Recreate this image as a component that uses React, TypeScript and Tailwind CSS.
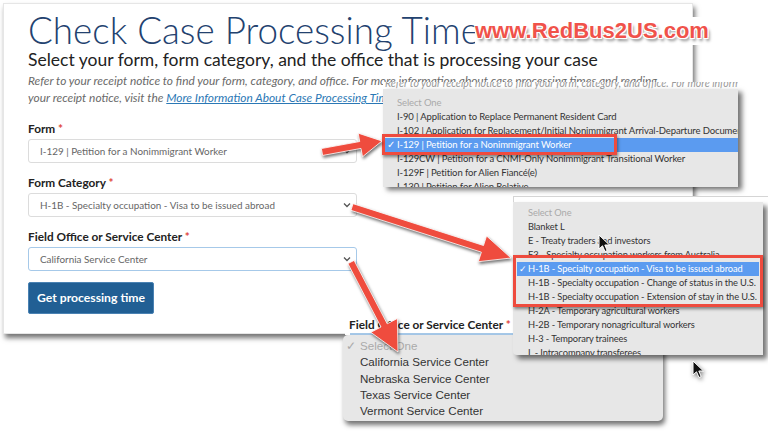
import React from "react";

const sans = { fontFamily: "Lato, 'Open Sans', sans-serif" };
const mac = { fontFamily: "'Liberation Sans', Arial, sans-serif" };

function arrowPoints(x1: number, y1: number, x2: number, y2: number, sw: number, hl: number, hw: number) {
  const dx = x2 - x1;
  const dy = y2 - y1;
  const len = Math.hypot(dx, dy);
  const ux = dx / len;
  const uy = dy / len;
  const px = -uy;
  const py = ux;
  const bx = x2 - ux * hl;
  const by = y2 - uy * hl;
  const pts = [
    [x1 + (px * sw) / 2, y1 + (py * sw) / 2],
    [bx + (px * sw) / 2, by + (py * sw) / 2],
    [bx + (px * hw) / 2, by + (py * hw) / 2],
    [x2, y2],
    [bx - (px * hw) / 2, by - (py * hw) / 2],
    [bx - (px * sw) / 2, by - (py * sw) / 2],
    [x1 - (px * sw) / 2, y1 - (py * sw) / 2],
  ];
  return pts.map((p) => p.join(",")).join(" ");
}

const Chevron = () => (
  <svg width="8" height="6" viewBox="0 0 8 6" className="shrink-0">
    <path d="M1 1.5 L4 4.5 L7 1.5" fill="none" stroke="#555" strokeWidth="1.3" />
  </svg>
);

const Cursor = ({ className }: { className: string }) => (
  <svg width="13" height="19" viewBox="0 0 13 19" className={className}>
    <path d="M1 1 L1 15 L4.5 11.8 L7 17.5 L9.2 16.6 L6.8 11 L11.5 11 Z" fill="#111" stroke="#fff" strokeWidth="1" />
  </svg>
);

const Field = ({ label, value, focused }: { label: string; value: string; focused?: boolean }) => (
  <div>
    <div className="h-[16px] leading-[16px] text-[11.8px] font-bold text-[#222]">
      {label} <span className="text-[#e0453a]">*</span>
    </div>
    <div
      className={`mt-[2px] h-[24px] w-[329px] rounded-[3px] border flex items-center justify-between pl-[11px] pr-[5px] text-[9.9px] text-[#666] ${
        focused ? "border-[#a6c9e9]" : "border-[#dcdcdc]"
      }`}
    >
      <span>{value}</span>
      <Chevron />
    </div>
  </div>
);

const formItems = [
  "I-90 | Application to Replace Permanent Resident Card",
  "I-102 | Application for Replacement/Initial Nonimmigrant Arrival-Departure Document",
];
const formItemsAfter = [
  "I-129CW | Petition for a CNMI-Only Nonimmigrant Transitional Worker",
  "I-129F | Petition for Alien Fiancé(e)",
  "I-130 | Petition for Alien Relative",
];

const catBefore = ["Blanket L", "E - Treaty traders and investors", "E3 - Specialty occupation workers from Australia"];
const catAfter = [
  "H-1B - Specialty occupation - Change of status in the U.S.",
  "H-1B - Specialty occupation - Extension of stay in the U.S.",
  "H-2A - Temporary agricultural workers",
  "H-2B - Temporary nonagricultural workers",
  "H-3 - Temporary trainees",
  "L - Intracompany transferees",
];

const offices = ["California Service Center", "Nebraska Service Center", "Texas Service Center", "Vermont Service Center"];

export default function App() {
  return (
    <div className="relative w-[768px] h-[434px] overflow-hidden bg-white" style={sans}>
      {/* main card */}
      <div className="ml-[3px] mt-[3px] w-[690px] h-[331px] bg-white border border-[#e6e6e6] shadow-[2px_4px_5px_rgba(0,0,0,0.55)] pl-[24px] pt-[6px]">
        <h1 className="h-[40px] leading-[40px] text-[36.8px] font-light text-[#23426f] whitespace-nowrap">
          Check Case Processing Times
        </h1>
        <div className="h-[20px] leading-[20px] text-[17.5px] text-[#222] whitespace-nowrap">
          Select your form, form category, and the office that is processing your case
        </div>
        <div className="mt-[2px] text-[11.9px] leading-[17px] italic text-[#6a6a6a] whitespace-nowrap">
          <div>
            Refer to your receipt notice to find your form, category, and office. For more information about case
            processing times and reading
          </div>
          <div>
            your receipt notice, visit the{" "}
            <span className="text-[#2b78b5] underline">More Information About Case Processing Times</span> page.
          </div>
        </div>
        <div className="mt-[15px] flex flex-col gap-[12px]">
          <Field label="Form" value="I-129 | Petition for a Nonimmigrant Worker" />
          <Field label="Form Category" value="H-1B - Specialty occupation - Visa to be issued abroad" />
          <Field label="Field Office or Service Center" value="California Service Center" focused />
        </div>
        <button className="mt-[11px] h-[32px] w-[126px] rounded-[2px] bg-[#215f94] border border-[#4a82b3] text-white text-[12.2px] font-bold">
          Get processing time
        </button>
      </div>

      {/* form dropdown */}
      <div className="absolute left-[383px] top-[82px] w-[355px] h-[7px] overflow-hidden bg-white">
        <div className="mt-[-6px] pl-[2px] text-[10.5px] italic text-[#999] whitespace-nowrap">
          Refer to your receipt notice to find your form, category, and office. For more inform
        </div>
      </div>
      <div className="absolute left-[383px] top-[89px] w-[355px] h-[98px] overflow-hidden bg-[#e7e7e7] shadow-[4px_3px_5px_rgba(0,0,0,0.55)] pt-[7px] text-[9.5px] tracking-[-0.12px] text-[#333]">
        <div className="h-[14px] leading-[14px] pl-[14px] text-[#aaa]">Select One</div>
        {formItems.map((t) => (
          <div key={t} className="h-[14px] leading-[14px] pl-[14px] whitespace-nowrap">
            {t}
          </div>
        ))}
        <div className="ml-[2px] h-[14px] leading-[14px] bg-[#5b9bf0] text-white flex">
          <span className="w-[12px] text-center">✓</span>
          <span>I-129 | Petition for a Nonimmigrant Worker</span>
        </div>
        {formItemsAfter.map((t) => (
          <div key={t} className="h-[14px] leading-[14px] pl-[14px] whitespace-nowrap">
            {t}
          </div>
        ))}
      </div>
      <div className="absolute left-[382px] top-[134px] w-[235px] h-[21px] border-[3px] border-[#ee4b3e] shadow-[1px_2px_3px_rgba(0,0,0,0.45)]" />

      {/* office dropdown */}
      <div className="absolute left-[345px] top-[317px] w-[168px] h-[18px] bg-white">
        <div className="pl-[4px] text-[11.8px] font-bold text-[#222] leading-[16px] whitespace-nowrap">
          Field Office or Service Center <span className="text-[#e0453a]">*</span>
        </div>
        <div className="ml-[5px] h-[2px] bg-[#a6c9e9]" />
      </div>
      <div
        className="absolute left-[343px] top-[335px] w-[320px] h-[86px] rounded-[5px] bg-[#e7e7e7] shadow-[2px_4px_5px_rgba(0,0,0,0.55)] pt-[3px] text-[11.6px] text-[#333]"
        style={mac}
      >
        <div className="h-[16.3px] leading-[16.3px] flex text-[#aaa]">
          <span className="w-[17px] text-right pr-[4px]">✓</span>
          <span>Select One</span>
        </div>
        {offices.map((t) => (
          <div key={t} className="h-[16.3px] leading-[16.3px] pl-[17px]">
            {t}
          </div>
        ))}
      </div>

      {/* category dropdown */}
      <div className="absolute left-[513px] top-[196px] w-[255px] h-[6px] bg-white border-t border-l border-[#d5d5d5]" />
      <div className="absolute left-[513px] top-[202px] w-[250px] h-[153px] overflow-hidden rounded-bl-[4px] bg-[#e7e7e7] shadow-[4px_4px_5px_rgba(0,0,0,0.55)] pt-[4px] text-[9.3px] tracking-[-0.12px] text-[#333]">
        <div className="h-[14px] leading-[14px] pl-[15px] text-[#aaa]">Select One</div>
        {catBefore.map((t) => (
          <div key={t} className="h-[14px] leading-[14px] pl-[15px] whitespace-nowrap">
            {t}
          </div>
        ))}
        <div className="mx-[4px] h-[14px] leading-[14px] bg-[#5b9bf0] text-white flex whitespace-nowrap">
          <span className="w-[11px] text-center">✓</span>
          <span>H-1B - Specialty occupation - Visa to be issued abroad</span>
        </div>
        {catAfter.map((t) => (
          <div key={t} className="h-[14px] leading-[14px] pl-[15px] whitespace-nowrap">
            {t}
          </div>
        ))}
      </div>
      <div className="absolute left-[513px] top-[255px] w-[250px] h-[52px] border-[3px] border-[#ee4b3e] shadow-[1px_2px_3px_rgba(0,0,0,0.45)]" />

      {/* arrows */}
      <svg className="absolute left-0 top-0 drop-shadow-[1px_2px_1.5px_rgba(0,0,0,0.55)]" width="768" height="434">
        <polygon points={arrowPoints(322, 152, 382, 141, 7, 22, 24)} fill="#ef4c3e" stroke="#fff" strokeWidth="0.8" />
        <polygon points={arrowPoints(352, 207, 511, 258, 7, 30, 27)} fill="#ef4c3e" stroke="#fff" strokeWidth="0.8" />
        <polygon points={arrowPoints(351, 262, 398, 352, 7, 30, 30)} fill="#ef4c3e" stroke="#fff" strokeWidth="0.8" />
      </svg>

      <Cursor className="absolute left-[598px] top-[234px]" />
      <Cursor className="absolute left-[692px] top-[360px] drop-shadow-[1px_2px_2px_rgba(0,0,0,0.5)]" />

      {/* watermark */}
      <div
        className="absolute left-[475px] top-[17px] bg-white text-[22px] leading-[28px] font-bold text-[#f0524a] whitespace-nowrap [text-shadow:0_0_2px_#fff,1px_1px_0_#fff,-1px_-1px_0_#fff,1px_-1px_0_#fff,-1px_1px_0_#fff,2px_3px_3px_rgba(0,0,0,0.45)]"
        style={mac}
      >
        www.RedBus2US.com
      </div>
    </div>
  );
}
